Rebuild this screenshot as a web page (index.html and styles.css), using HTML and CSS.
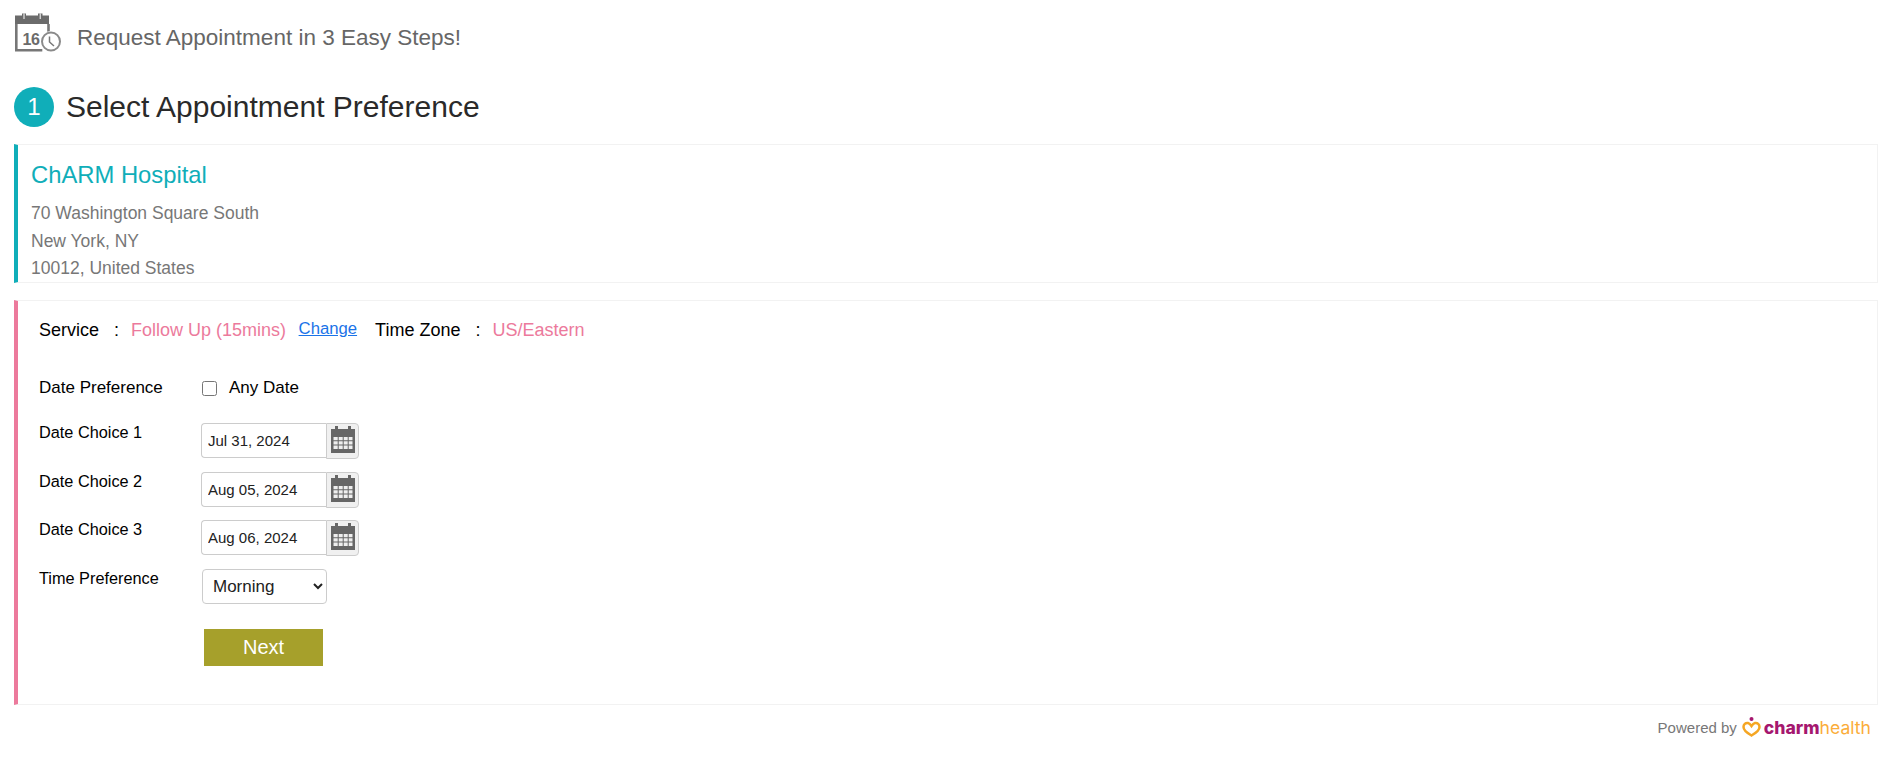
FILE: index.html
```html
<!DOCTYPE html>
<html lang="en">
<head>
<meta charset="utf-8">
<title>Request Appointment</title>
<link rel="stylesheet" href="styles.css">
</head>
<body>
<header class="top">
  <svg class="top-icon" width="47" height="39" viewBox="0 0 47 39">
    <path class="ic-dark" d="M0 2.500h34v8.500H0z"/>
    <path class="ic-dark" d="M7 .5h4v8H7zM23 .5h4.500v8H23z"/>
    <path class="ic-ring" d="M9 .5v5.500M25.200 .5v5.500"/>
    <path class="ic-frame" d="M1.300 11v26.300h26M33.500 11v9"/>
    <text class="ic-num" x="7.500" y="32">16</text>
    <circle class="ic-halo" cx="36" cy="28.500" r="10.500"/>
    <circle class="ic-clock" cx="36" cy="28.500" r="9"/>
    <path class="ic-hand" d="M34.500 23.500v5.500l4.500 4"/>
  </svg>
  <span class="top-text">Request Appointment in 3 Easy Steps!</span>
</header>

<div class="step">
  <span class="step-num">1</span>
  <h1 class="step-title">Select Appointment Preference</h1>
</div>

<section class="panel panel-teal">
  <h2 class="hospital">ChARM Hospital</h2>
  <p class="addr">70 Washington Square South</p>
  <p class="addr">New York, NY</p>
  <p class="addr">10012, United States</p>
</section>

<section class="panel panel-pink">
  <div class="service">
    <span>Service</span><span class="colon">:</span><span class="pink">Follow Up (15mins)</span>
    <a class="change" href="#">Change</a>
    <span>Time Zone</span><span class="colon">:</span><span class="pink">US/Eastern</span>
  </div>

  <div class="form">
    <div class="row row-check">
      <label class="lbl">Date Preference</label>
      <label class="any"><input class="check" type="checkbox"><span>Any Date</span></label>
    </div>
    <div class="row">
      <label class="lbl">Date Choice 1</label>
      <div class="date"><input class="date-input" type="text" value="Jul 31, 2024"><button class="date-btn" type="button"><svg width="24" height="27" viewBox="0 0 24 27"><use href="#cal"/></svg></button></div>
    </div>
    <div class="row">
      <label class="lbl">Date Choice 2</label>
      <div class="date"><input class="date-input" type="text" value="Aug 05, 2024"><button class="date-btn" type="button"><svg width="24" height="27" viewBox="0 0 24 27"><use href="#cal"/></svg></button></div>
    </div>
    <div class="row">
      <label class="lbl">Date Choice 3</label>
      <div class="date"><input class="date-input" type="text" value="Aug 06, 2024"><button class="date-btn" type="button"><svg width="24" height="27" viewBox="0 0 24 27"><use href="#cal"/></svg></button></div>
    </div>
    <div class="row">
      <label class="lbl">Time Preference</label>
      <select class="time"><option>Morning</option><option>Afternoon</option><option>Evening</option></select>
    </div>
    <button class="next" type="button">Next</button>
  </div>
</section>

<footer class="foot">
  <span class="powered">Powered by</span>
  <svg class="heart" width="19" height="20" viewBox="0 0 19 20">
    <circle class="heart-dot" cx="9.500" cy="2" r="2"/>
    <path class="heart-line" d="M6 6C3.500 5.500 1.500 7.500 1.500 10c0 3.500 4.500 6.500 8 8.500 3.500-2 8-5 8-8.500 0-2.500-2-4.500-4.500-4-1.500.4-2.500 1.500-3.500 3-1-1.500-2-2.600-3.500-3z"/>
  </svg>
  <span class="logo"><span class="logo-a">charm</span><span class="logo-b">health</span></span>
</footer>

<svg class="defs" width="0" height="0">
  <defs>
    <g id="cal">
      <path class="cal-fill" d="M0 3h4V0h3v3h10V0h3v3h4v24H0z"/>
      <path class="cal-cells" d="M2.500 11h4.200v3.200H2.500zM7.700 11h4v3.200h-4zM12.700 11h4v3.200h-4zM17.700 11h3.800v3.200h-3.800zM2.500 15.200h4.200v3.300H2.500zM7.700 15.200h4v3.300h-4zM12.700 15.200h4v3.300h-4zM17.700 15.200h3.800v3.300h-3.800zM2.500 19.500h4.200V23H2.500zM7.700 19.500h4V23h-4zM12.700 19.500h4V23h-4zM17.700 19.500h3.800V23h-3.800z"/>
    </g>
  </defs>
</svg>
</body>
</html>
```
FILE: styles.css
```css
* { box-sizing: border-box; }
body {
  margin: 0;
  padding: 12px 9px 0 14px;
  background: #fff;
  font-family: "Liberation Sans", Arial, sans-serif;
  color: #000;
  height: 760px;
  overflow: hidden;
}
.top { display: flex; align-items: flex-end; height: 42px; padding-left: 1px; }
.top-icon { display: block; margin-bottom: 2px; }
.ic-dark { fill: #6b6b6b; }
.ic-ring { fill: none; stroke: #fff; stroke-width: 1; }
.ic-frame { fill: none; stroke: #777; stroke-width: 2.600; }
.ic-num { font: bold 16px "Liberation Sans", Arial, sans-serif; letter-spacing: -.5px; fill: #6b6b6b; }
.ic-halo { fill: #fff; }
.ic-clock { fill: #fff; stroke: #8a8a8a; stroke-width: 2; }
.ic-hand { fill: none; stroke: #777; stroke-width: 1.500; }
.top-text { font-size: 22.500px; color: #666; margin-left: 15px; line-height: 26px; margin-bottom: 3px; }
.step { display: flex; align-items: center; margin-top: 33px; height: 40px; }
.step-num {
  width: 40px; height: 40px; border-radius: 50%;
  background: #10aeb9; color: #fff; font-size: 24px;
  display: flex; align-items: center; justify-content: center;
}
.step-title { margin: -1px 0 0 12px; font-size: 30px; font-weight: 400; color: #2a2a2a; }
.panel { border: 1px solid #f2f2f2; }
.panel-teal { margin-top: 17px; height: 139px; border-left: 4px solid #10aeb9; padding: 15px 0 0 13px; }
.hospital { margin: 0 0 10px; font-size: 23.800px; font-weight: 400; color: #10aeb9; line-height: 30px; }
.addr { margin: 0; font-size: 17.500px; line-height: 27.500px; color: #777; }
.panel-pink { margin-top: 17px; height: 405px; border-left: 4px solid #ec7a9c; padding: 18px 0 0 21px; }
.service { display: flex; align-items: center; font-size: 18px; line-height: 22px; }
.colon { margin: 0 12px 0 15px; }
.pink { color: #ec7a9c; }
.change { font-size: 16.700px; color: #1a73e8; margin: -2px 18px 0 12.500px; }
.form { margin-top: 35px; font-size: 16.300px; }
.row { display: flex; margin-bottom: 12.500px; }
.row-check { align-items: center; height: 24px; margin-bottom: 23px; font-size: 17px; }
.lbl { width: 162px; line-height: 18px; flex: none; }
.any { display: flex; align-items: center; }
.check { width: 15px; height: 15px; margin: 0 12px 0 1px; }
.date { display: flex; align-items: flex-start; }
.date-input {
  width: 125px; height: 35px; padding: 0 6px; font: 15px "Liberation Sans", Arial, sans-serif; color: #222;
  border: 1px solid #ccc; border-right: none; border-radius: 4px 0 0 4px; outline: none;
}
.date-btn {
  width: 33px; height: 36px; padding: 2px 0 0; display: flex; align-items: flex-start; justify-content: center;
  background: #f0f0f0; border: 1px solid #ccc; border-radius: 0 4px 4px 0;
}
.cal-fill { fill: #666; }
.cal-cells { fill: #eee; }
.time {
  width: 125px; height: 35px; margin-left: 1px; padding: 0 6px; font: 17px "Liberation Sans", Arial, sans-serif; color: #222;
  background: #fff; border: 1px solid #ccc; border-radius: 4px;
}
.next {
  display: block; width: 119px; height: 37px; margin: 25px 0 0 165px;
  background: #a6a02b; color: #fff; border: none; font: 20px "Liberation Sans", Arial, sans-serif;
}
.foot { display: flex; align-items: center; justify-content: flex-end; height: 22px; margin-top: 11px; padding-right: 7px; font-size: 15px; }
.powered { color: #777; }
.heart { margin: 0 3px 0 5px; }
.heart-dot { fill: #a5176f; }
.heart-line { fill: none; stroke: #f5a623; stroke-width: 2.500; }
.logo { font: 700 17.600px "Inter", sans-serif; }
.logo-a { color: #a5176f; font-weight: 800; }
.logo-b { color: #fbad3a; font-weight: 400; }
.defs { position: absolute; }
```
